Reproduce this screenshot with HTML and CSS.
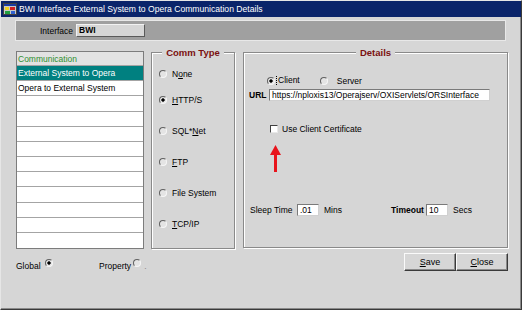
FILE: index.html
```html
<!DOCTYPE html>
<html>
<head>
<meta charset="utf-8">
<link rel="stylesheet" href="styles.css">
</head>
<body>
<div class="window">
  <div class="titlebar">
    <svg class="appicon" width="14" height="14" viewBox="0 0 14 14">
      <rect x="0.5" y="1.5" width="13" height="11" fill="#c8c8c8" stroke="#404040"/>
      <rect x="1" y="2" width="12" height="2" fill="#1a3aa0"/>
      <rect x="2" y="5" width="4" height="3" fill="#f0d020"/>
      <rect x="7" y="5" width="5" height="3" fill="#d02020"/>
      <rect x="2" y="9" width="5" height="3" fill="#20a040"/>
      <rect x="8" y="9" width="4" height="3" fill="#3060d0"/>
    </svg>
    <span class="title">BWI Interface External System to Opera Communication Details</span>
  </div>
  <div class="content">
    <div class="ifacebar">
      <span class="lbl">Interface</span>
      <div class="rofield">BWI</div>
    </div>
    <div class="main">
      <div class="list">
        <div class="row head">Communication</div>
        <div class="row sel">External System to Opera</div>
        <div class="row">Opera to External System</div>
        <div class="row"></div>
        <div class="row"></div>
        <div class="row"></div>
        <div class="row"></div>
        <div class="row"></div>
        <div class="row"></div>
        <div class="row"></div>
        <div class="row"></div>
        <div class="row"></div>
        <div class="row last"></div>
      </div>
      <div class="group comm">
        <div class="gtitle">Comm Type</div>
        <div class="opts">
          <div class="opt first"><span class="radio"></span>N<u>o</u>ne</div>
          <div class="opt"><span class="radio on"></span><u>H</u>TTP/S</div>
          <div class="opt"><span class="radio"></span>SQL*<u>N</u>et</div>
          <div class="opt"><span class="radio"></span><u>F</u>TP</div>
          <div class="opt"><span class="radio"></span>File System</div>
          <div class="opt"><span class="radio"></span><u>T</u>CP/IP</div>
        </div>
      </div>
      <div class="group details">
        <div class="gtitle">Details</div>
        <div class="client-row">
          <span class="radio on"></span><span class="focus">Client</span>
          <span class="radio server-radio"></span><span>Server</span>
        </div>
        <div class="url-row">
          <span class="b url-lbl">URL</span>
          <div class="field url">https://nploxis13/Operajserv/OXIServlets/ORSInterface</div>
        </div>
        <div class="cb-row">
          <span class="checkbox"></span><span>Use Client Certificate</span>
        </div>
        <div class="sleep-row">
          <span class="sleep-lbl">Sleep Time</span>
          <div class="field small">.01</div>
          <span class="unit">Mins</span>
          <span class="b timeout-lbl">Timeout</span>
          <div class="field small">10</div>
          <span class="unit2">Secs</span>
        </div>
        <svg class="arrow" width="11" height="27" viewBox="0 0 11 27">
          <polygon points="0,10 5.5,0 11,10" fill="#e8141c"/>
          <rect x="4" y="9" width="3" height="18" fill="#e8141c"/>
        </svg>
      </div>
    </div>
    <div class="bottom">
      <div class="scope">
        <span class="scope-g">Global <span class="radio on"></span></span>
        <span>Property</span><span class="radio p-radio"></span><span class="dot">.</span>
      </div>
      <div class="buttons">
        <div class="btn"><u>S</u>ave</div>
        <div class="btn"><u>C</u>lose</div>
      </div>
    </div>
  </div>
</div>
</body>
</html>
```

FILE: styles.css
```css
* { box-sizing: border-box; }

body {
  margin: 0;
  background: #ffffff;
  font-family: "Liberation Sans", Arial, sans-serif;
  font-size: 8.5px;
  color: #000;
}

.window {
  width: 522px;
  height: 310px;
  background: #d6d6d6;
  border: 1px solid;
  border-color: #e6e6e6 #3a3a3a #3a3a3a #e6e6e6;
  box-shadow: inset -1px -1px 0 #8a8a8a;
  display: flex;
  flex-direction: column;
}

.titlebar {
  height: 16px;
  background: #0a246a;
  color: #fff;
  display: flex;
  align-items: center;
  padding-left: 2px;
  gap: 2px;
  flex: none;
}
.title { font-size: 8.6px; white-space: nowrap; }
.appicon { flex: none; }

.content { display: flex; flex-direction: column; }

.ifacebar {
  margin: 3px 0 0 14px;
  width: 491px;
  height: 21px;
  background: #a0a0a0;
  border: 1px solid #e8e8e8;
  display: flex;
  align-items: center;
  padding-left: 24px;
}
.ifacebar .lbl { width: 36px; }
.rofield {
  width: 69px;
  height: 13px;
  background: #d6d6d6;
  border: 1px solid;
  border-color: #f2f2f2 #5a5a5a #5a5a5a #f2f2f2;
  font-weight: bold;
  padding-left: 2px;
  line-height: 11px;
}

.main {
  display: flex;
  align-items: flex-start;
  padding-left: 15px;
  height: 208px;
}

.list {
  margin-top: 10px;
  width: 128px;
  height: 198px;
  border: 1px solid #7c7c7c;
  display: grid;
  grid-template-rows: 14px repeat(12, 1fr);
  background: #fff;
}
.row {
  border-bottom: 1px solid #a4a4a4;
  display: flex;
  align-items: center;
  padding-left: 1px;
  white-space: nowrap;
}
.row.last { border-bottom: none; }
.row.head { background: #e2e2e2; color: #2f8f2f; }
.row.sel { background: #008080; color: #fff; }

.group {
  margin-top: 11px;
  border: 1px solid #8a8a8a;
  box-shadow: inset 1px 1px 0 #fff, 1px 1px 0 #fff;
  display: flex;
  flex-direction: column;
}
.comm { width: 84px; height: 197px; margin-left: 7px; }
.details { width: 265px; height: 196px; margin-left: 8px; position: relative; }

.gtitle {
  align-self: center;
  margin-top: -7px;
  height: 13px;
  line-height: 13px;
  padding: 0 4px;
  background: #d6d6d6;
  color: #7a1010;
  font-weight: bold;
  font-size: 9.5px;
}

.opts {
  display: flex;
  flex-direction: column;
  gap: 18px;
  margin-top: 8px;
  padding-left: 7px;
}
.opt {
  display: flex;
  align-items: center;
  height: 13px;
  white-space: nowrap;
}
.opt.first { margin-bottom: -5px; }
.opt .radio { margin-right: 5px; }

.radio {
  flex: none;
  display: inline-block;
  width: 8px;
  height: 8px;
  border-radius: 50%;
  border: 1px solid;
  border-color: #606060 #f6f6f6 #f6f6f6 #606060;
  background: #e4e4e4;
}
.radio.on {
  background: radial-gradient(circle, #000 0 1.4px, #e4e4e4 1.9px);
}

.b { font-weight: bold; }

.client-row {
  display: flex;
  align-items: center;
  height: 13px;
  margin-top: 15px;
  padding-left: 23px;
  white-space: nowrap;
}
.focus {
  margin-left: 1px;
  padding-left: 1px;
  border-left: 1px dotted #000;
  line-height: 9px;
}
.server-radio { margin-left: 20px; margin-right: 9px; }

.url-row {
  display: flex;
  align-items: center;
  height: 12px;
  margin-top: 2px;
  padding-left: 5px;
}
.url-lbl { width: 20px; }
.field {
  height: 12px;
  background: #fff;
  border: 1px solid;
  border-color: #7a7a7a #d0d0d0 #d0d0d0 #7a7a7a;
  padding-left: 2px;
  line-height: 10px;
  white-space: nowrap;
  overflow: hidden;
}
.field.url { width: 221px; }
.field.small { width: 22px; }

.cb-row {
  display: flex;
  align-items: center;
  height: 11px;
  margin-top: 22px;
  padding-left: 26px;
}
.checkbox {
  width: 8px;
  height: 8px;
  background: #fff;
  border: 1px solid;
  border-color: #404040 #e8e8e8 #e8e8e8 #404040;
  margin-right: 4px;
  flex: none;
}

.sleep-row {
  display: flex;
  align-items: center;
  height: 12px;
  margin-top: 70px;
  padding-left: 6px;
  white-space: nowrap;
}
.sleep-lbl { width: 47px; }
.unit { margin-left: 5px; width: 67px; }
.timeout-lbl { width: 35px; }
.unit2 { margin-left: 5px; }

.arrow {
  position: absolute;
  left: 26px;
  top: 92px;
}

.bottom {
  display: flex;
  align-items: flex-start;
  width: 507px;
  padding-left: 15px;
  margin-top: 4px;
}
.scope {
  display: flex;
  align-items: center;
  height: 10px;
  margin-top: 8px;
  white-space: nowrap;
}
.scope-g {
  display: flex;
  align-items: center;
  width: 83px;
  gap: 4px;
}
.scope .radio { margin-bottom: 7px; }
.p-radio { margin-left: 2px; }
.dot { margin-left: 3px; color: #888; }

.buttons {
  margin-left: auto;
  display: flex;
}
.btn {
  width: 52px;
  height: 18px;
  border: 1px solid;
  border-color: #fafafa #3a3a3a #3a3a3a #fafafa;
  box-shadow: inset -1px -1px 0 #8a8a8a;
  background: #d6d6d6;
  display: flex;
  align-items: center;
  justify-content: center;
  font-size: 9px;
}
```
